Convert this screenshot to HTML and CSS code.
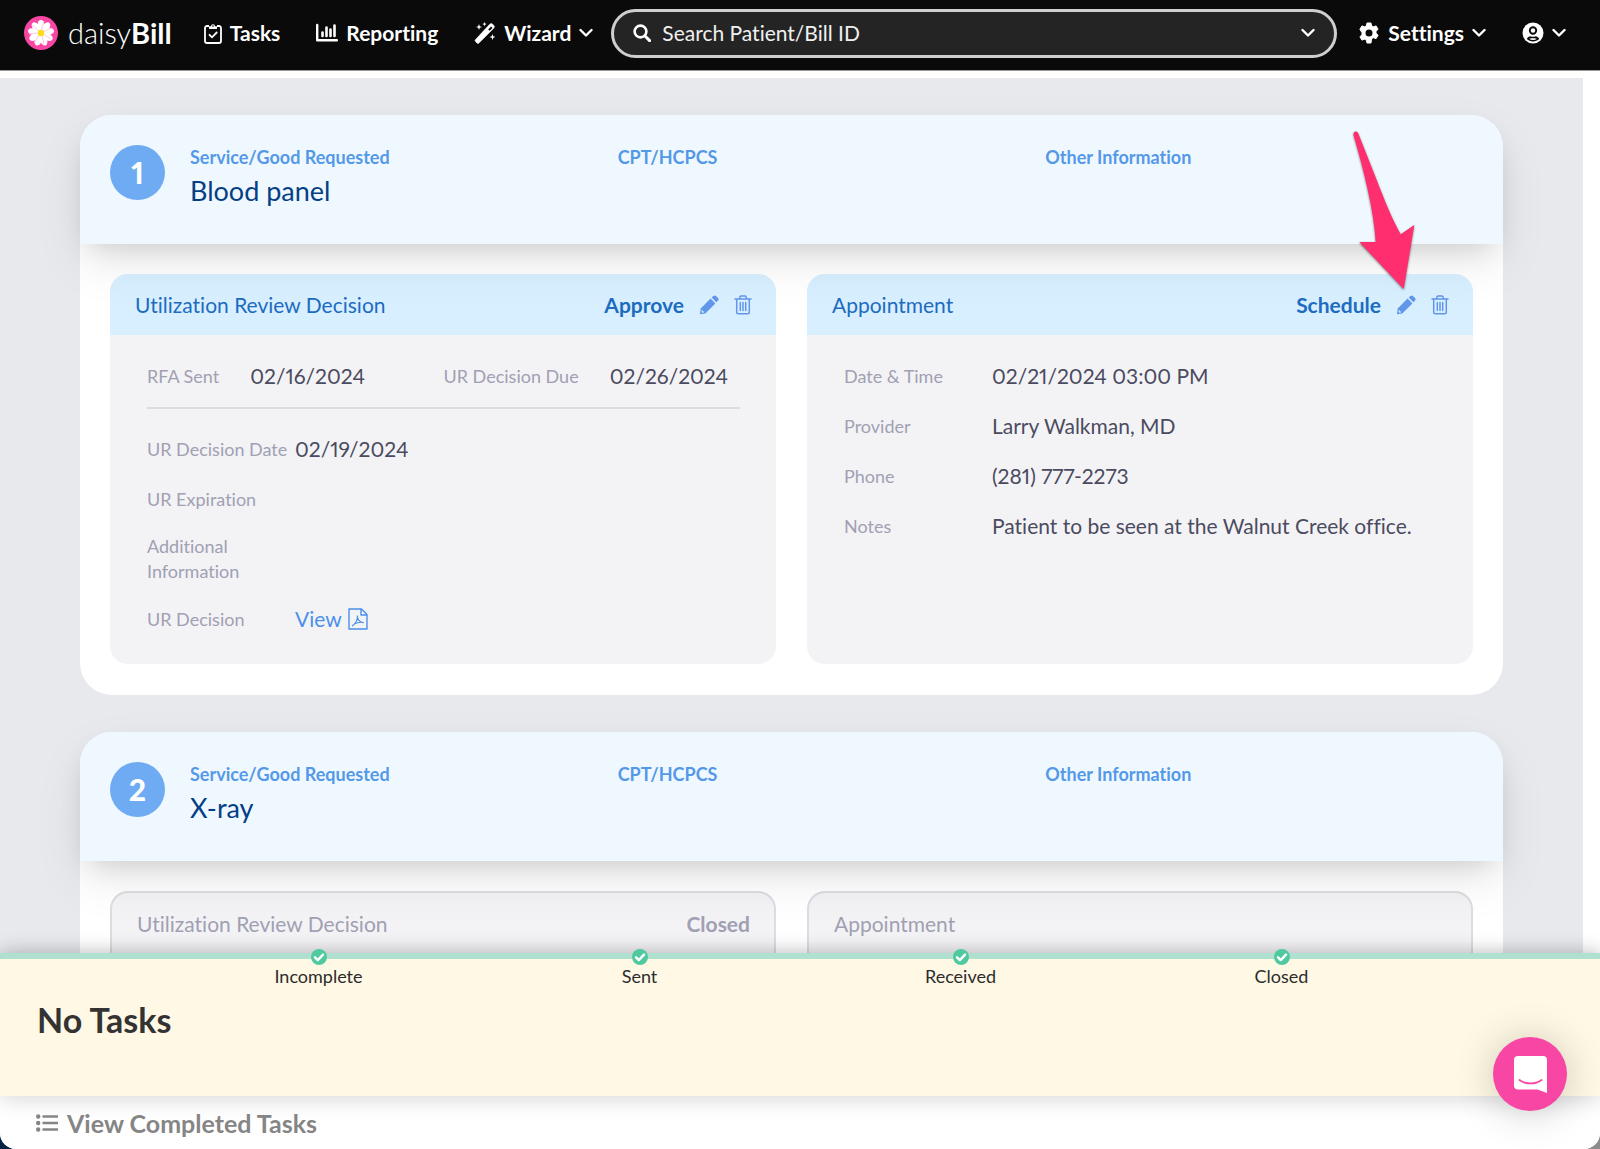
FILE: index.html
```html
<!DOCTYPE html>
<html lang="en">

<head>
    <meta charset="UTF-8">
    <meta name="viewport" content="width=device-width, initial-scale=1.0">
    <title>daisyBill</title>
    <link rel="stylesheet" href="styles.css">
</head>

<body>
    <!-- Shared icons -->
    <svg class="icon-defs" aria-hidden="true">
        <symbol id="chevron" viewBox="0 0 14 10">
            <path d="M1.5 2l5.5 5.5L12.5 2" fill="none" stroke="currentColor" stroke-width="2.4" stroke-linecap="round" stroke-linejoin="round"/>
        </symbol>
        <symbol id="pencil" viewBox="0 0 20 20">
            <path d="M11.6 3.6l4.800 4.800L6.300 18.500 1 19.200l.7-5.600z" fill="currentColor"/>
            <path d="M12.700 2.600l1.700-1.600a1.900 1.900 0 0 1 2.600 0l2 2a1.900 1.900 0 0 1 0 2.600l-1.600 1.700z" fill="currentColor"/>
            <path d="M3 14.600l.8 1.600 1.600.6-.4.700-1.600.3-.9-.9.200-1.600z" fill="#d8efff"/>
        </symbol>
        <symbol id="trash" viewBox="0 0 18 20">
            <path d="M1 4h16M5.8 4V2.4c0-.8.5-1.3 1.2-1.3h4c.7 0 1.2.5 1.2 1.3V4M2.7 4v13.2c0 .9.6 1.5 1.5 1.5h9.6c.9 0 1.5-.6 1.5-1.5V4M6.3 7.5v8M9 7.5v8M11.7 7.5v8" fill="none" stroke="currentColor" stroke-width="1.5" stroke-linecap="round"/>
        </symbol>
        <symbol id="check" viewBox="0 0 16 16">
            <circle cx="8" cy="8" r="8" fill="#51c9a0"/>
            <path d="M4 8.3l2.8 2.8L12 5.6" fill="none" stroke="#fff" stroke-width="2.4" stroke-linecap="round" stroke-linejoin="round"/>
        </symbol>
    </svg>

    <!-- Top navigation -->
    <header class="navbar">
        <a class="logo" href="#">
            <svg class="logo-mark" viewBox="0 0 34 34" aria-hidden="true">
                <circle cx="17" cy="17" r="17" fill="#f846a5"/>
                <g fill="#fff">
                    <ellipse cx="17" cy="9" rx="3.4" ry="5.2"/>
                    <ellipse cx="17" cy="9" rx="3.4" ry="5.2" transform="rotate(40 17 17)"/>
                    <ellipse cx="17" cy="9" rx="3.4" ry="5.2" transform="rotate(80 17 17)"/>
                    <ellipse cx="17" cy="9" rx="3.4" ry="5.2" transform="rotate(120 17 17)"/>
                    <ellipse cx="17" cy="9" rx="3.4" ry="5.2" transform="rotate(160 17 17)"/>
                    <ellipse cx="17" cy="9" rx="3.4" ry="5.2" transform="rotate(200 17 17)"/>
                    <ellipse cx="17" cy="9" rx="3.4" ry="5.2" transform="rotate(240 17 17)"/>
                    <ellipse cx="17" cy="9" rx="3.4" ry="5.2" transform="rotate(280 17 17)"/>
                    <ellipse cx="17" cy="9" rx="3.4" ry="5.2" transform="rotate(320 17 17)"/>
                    <circle cx="17" cy="17" r="6"/>
                </g>
                <path d="M17 15l3-10M19 16l9-4M19 18l8 5M18 19l2 9M15 19l-5 8M14 17l-9 1M15 15L8 9" stroke="#fbc3e0" stroke-width="0.9"/>
                <circle cx="17" cy="17" r="3.2" fill="#fddc13"/>
            </svg>
            <span class="logo-text">daisy<b>Bill</b></span>
        </a>
        <nav class="nav-links">
            <a href="#">
                <svg width="18" height="22" viewBox="0 0 18 22" aria-hidden="true">
                    <path d="M5 4H3a2 2 0 0 0-2 2v13a2 2 0 0 0 2 2h12a2 2 0 0 0 2-2V6a2 2 0 0 0-2-2h-2" fill="none" stroke="#fff" stroke-width="1.8"/>
                    <path d="M5 7V4.2h2a2 2 0 0 1 4 0h2V7z" fill="#fff"/>
                    <circle cx="9" cy="4" r="0.8" fill="#0a0a0a"/>
                    <path d="M5.5 12.8l2.5 2.5 4.7-4.8" fill="none" stroke="#fff" stroke-width="1.8" stroke-linecap="round"/>
                </svg>
                Tasks
            </a>
            <a href="#">
                <svg width="22" height="20" viewBox="0 0 22 20" aria-hidden="true">
                    <path d="M1.2 2v15.2H21" fill="none" stroke="#fff" stroke-width="2.4" stroke-linecap="round" stroke-linejoin="round"/>
                    <path d="M6.5 13V9.5M10.5 13V4.5M14.500 13V6.500M18.500 13V2.500" stroke="#fff" stroke-width="2.6" stroke-linecap="round"/>
                </svg>
                Reporting
            </a>
            <button type="button">
                <svg width="22" height="22" viewBox="0 0 22 22" aria-hidden="true">
                    <path d="M1.6 17.5L15.7 2.3a2.2 2.2 0 0 1 3 0l1 1a2.2 2.2 0 0 1 0 3L5 20.9a1.5 1.5 0 0 1-2.1 0L1.5 19.500a1.4 1.4 0 0 1 .1-2z" fill="#fff" stroke="#fff" stroke-width="0.6"/>
                    <path d="M14.2 7.5l2.8-3 1.5 1.4-2.900 2.9z" fill="#0a0a0a"/>
                    <path d="M5 2l.8 2.2L8 5l-2.200.8L5 8l-.8-2.200L2 5l2.200-.8zM10.500 0l.6 1.500 1.500.6-1.500.6-.6 1.500-.6-1.500-1.500-.6 1.500-.6zM18.500 12l.8 2.200 2.200.8-2.200.8-.8 2.200-.8-2.200-2.200-.8 2.200-.8z" fill="#fff"/>
                </svg>
                Wizard
                <svg class="chevron" aria-hidden="true"><use href="#chevron"/></svg>
            </button>
        </nav>
        <form class="search">
            <svg width="18" height="18" viewBox="0 0 18 18" aria-hidden="true">
                <circle cx="7.5" cy="7.5" r="5.9" fill="none" stroke="#fff" stroke-width="2.6"/>
                <path d="M12 12l4.6 4.6" stroke="#fff" stroke-width="3" stroke-linecap="round"/>
            </svg>
            <input type="text" aria-label="Search Patient/Bill ID" placeholder="Search Patient/Bill ID">
            <button type="button" aria-label="Search options">
                <svg class="chevron" aria-hidden="true"><use href="#chevron"/></svg>
            </button>
        </form>
        <div class="nav-links">
            <button type="button">
                <svg width="22" height="22" viewBox="0 0 22 22" aria-hidden="true">
                    <path d="M9 1h4l.6 2.8 1.8 1 2.7-.9 2 3.4-2.1 1.9v2.100l2.100 1.900-2 3.400-2.700-.9-1.800 1L13 21H9l-.6-2.800-1.800-1-2.700.9-2-3.400L4 12.800v-2.100L1.900 7.300l2-3.400 2.700.9 1.800-1z" fill="#fff" stroke="#fff" stroke-linejoin="round"/>
                    <circle cx="11" cy="11" r="3.5" fill="#0a0a0a"/>
                </svg>
                Settings
                <svg class="chevron" aria-hidden="true"><use href="#chevron"/></svg>
            </button>
            <button type="button" aria-label="Account">
                <svg width="22" height="22" viewBox="0 0 22 22" aria-hidden="true">
                    <circle cx="11" cy="11" r="10.5" fill="#fff"/>
                    <circle cx="11" cy="8.5" r="3.2" fill="none" stroke="#0a0a0a" stroke-width="1.9"/>
                    <path d="M4.800 17c.8-1.900 2.300-2.700 3.600-2.700 1.700.7 3.500.7 5.200 0 1.300 0 2.800.8 3.600 2.700-3.300 3.300-9.100 3.300-12.400 0z" fill="#0a0a0a"/>
                    <path d="M7 16.800c1-.9 7-.9 8 0-2.300 1.700-5.700 1.700-8 0z" fill="#fff"/>
                </svg>
                <svg class="chevron" aria-hidden="true"><use href="#chevron"/></svg>
            </button>
        </div>
    </header>

    <!-- Requested services -->
    <main class="content">
        <section class="card">
            <div class="card-header">
                <span class="number">1</span>
                <div class="request">
                    <div>
                        <h3>Service/Good Requested</h3>
                        <p>Blood panel</p>
                    </div>
                    <div>
                        <h3>CPT/HCPCS</h3>
                    </div>
                    <div>
                        <h3>Other Information</h3>
                    </div>
                </div>
            </div>
            <div class="card-body">
                <div class="panel">
                    <div class="panel-header">
                        <h4>Utilization Review Decision</h4>
                        <strong>Approve</strong>
                        <button type="button" aria-label="Edit decision"><svg width="20" height="20" aria-hidden="true"><use href="#pencil"/></svg></button>
                        <button type="button" aria-label="Delete decision"><svg width="18" height="20" aria-hidden="true"><use href="#trash"/></svg></button>
                    </div>
                    <div class="panel-body">
                        <dl class="dates">
                            <div><dt>RFA Sent</dt><dd>02/16/2024</dd></div>
                            <div><dt>UR Decision Due</dt><dd>02/26/2024</dd></div>
                        </dl>
                        <dl class="details">
                            <dt>UR Decision Date</dt>
                            <dd>02/19/2024</dd>
                            <dt>UR Expiration</dt>
                            <dd></dd>
                            <dt>Additional Information</dt>
                            <dd></dd>
                            <dt>UR Decision</dt>
                            <dd>
                                <a class="view-link" href="#">View
                                    <svg width="20" height="22" viewBox="0 0 20 22" aria-hidden="true">
                                        <path d="M1 1h12.500L19 6.500V21H1zM13 1v6h6" fill="none" stroke="currentColor" stroke-width="1.4" stroke-linejoin="round"/>
                                        <path d="M4.500 17.800c3-2.300 5.300-6.500 4.900-10.300 0 4 2 6.800 6.500 7.200-3-.8-6.500-.2-9.500 1.200" fill="none" stroke="currentColor" stroke-width="1.1" stroke-linecap="round"/>
                                    </svg>
                                </a>
                            </dd>
                        </dl>
                    </div>
                </div>
                <div class="panel">
                    <div class="panel-header">
                        <h4>Appointment</h4>
                        <strong>Schedule</strong>
                        <button type="button" aria-label="Edit appointment"><svg width="20" height="20" aria-hidden="true"><use href="#pencil"/></svg></button>
                        <button type="button" aria-label="Delete appointment"><svg width="18" height="20" aria-hidden="true"><use href="#trash"/></svg></button>
                    </div>
                    <div class="panel-body">
                        <dl class="details">
                            <dt>Date &amp; Time</dt>
                            <dd>02/21/2024 03:00 PM</dd>
                            <dt>Provider</dt>
                            <dd>Larry Walkman, MD</dd>
                            <dt>Phone</dt>
                            <dd>(281) 777-2273</dd>
                            <dt>Notes</dt>
                            <dd>Patient to be seen at the Walnut Creek office.</dd>
                        </dl>
                    </div>
                </div>
            </div>
            <!-- Pointer to the edit button -->
            <svg class="arrow" width="70" height="170" viewBox="0 0 70 170" aria-hidden="true">
                <path d="M3.500 9C3 5 7 4.500 8.300 7.500L26.700 54C34 73 42 93 50.700 108.300L64.300 99 53.700 163 9.300 116h16.400C24 85 14 45 3.500 9z" fill="#ff2e6e"/>
            </svg>
        </section>

        <section class="card">
            <div class="card-header">
                <span class="number">2</span>
                <div class="request">
                    <div>
                        <h3>Service/Good Requested</h3>
                        <p>X-ray</p>
                    </div>
                    <div>
                        <h3>CPT/HCPCS</h3>
                    </div>
                    <div>
                        <h3>Other Information</h3>
                    </div>
                </div>
            </div>
            <div class="card-body">
                <div class="panel closed">
                    <div class="panel-header">
                        <h4>Utilization Review Decision</h4>
                        <strong>Closed</strong>
                    </div>
                </div>
                <div class="panel closed">
                    <div class="panel-header">
                        <h4>Appointment</h4>
                    </div>
                </div>
            </div>
        </section>
    </main>

    <!-- Task drawer -->
    <footer class="tasks">
        <div class="tasks-current">
            <ol class="steps">
                <li><svg width="16" height="16" aria-hidden="true"><use href="#check"/></svg>Incomplete</li>
                <li><svg width="16" height="16" aria-hidden="true"><use href="#check"/></svg>Sent</li>
                <li><svg width="16" height="16" aria-hidden="true"><use href="#check"/></svg>Received</li>
                <li><svg width="16" height="16" aria-hidden="true"><use href="#check"/></svg>Closed</li>
            </ol>
            <h2>No Tasks</h2>
        </div>
        <a class="completed" href="#">
            <svg width="22" height="18" viewBox="0 0 22 18" aria-hidden="true">
                <circle cx="2.2" cy="2.5" r="2.2"/>
                <circle cx="2.2" cy="9" r="2.2"/>
                <circle cx="2.2" cy="15.5" r="2.2"/>
                <path d="M6.500 1.200h15.500v2.600H6.500zM6.500 7.700h15.500v2.600H6.500zM6.500 14.200h15.500v2.600H6.500z"/>
            </svg>
            View Completed Tasks
        </a>
    </footer>

    <button class="chat" type="button" aria-label="Open chat">
        <svg width="33" height="37" viewBox="0 0 33 37" aria-hidden="true">
            <path d="M4 0h25a4 4 0 0 1 4 4v33l-9.500-3.500H4a4 4 0 0 1-4-4V4a4 4 0 0 1 4-4z" fill="#fff"/>
            <path d="M5.500 24c6 4.600 16 4.600 22 0" fill="none" stroke="#f846a5" stroke-width="1.8" stroke-linecap="round"/>
        </svg>
    </button>
</body>

</html>
```

FILE: styles.css
```css
/* General */
* {
    box-sizing: border-box;
}

html {
    background: linear-gradient(to right, #032445, #8c8c8c);
}

body {
    font-family: Lato, 'Open Sans', sans-serif;
    font-size: 21px;
    line-height: 30px;
    font-variant-ligatures: none;
    font-variant-numeric: proportional-nums;
    margin: 0;
    height: 100vh;
    display: flex;
    flex-direction: column;
    background: #fff;
    border-radius: 0 0 16px 16px;
    overflow: hidden;
    color: #4b4b5f;
}

h2, h3, h4, p, dl, dd, ol {
    margin: 0;
    padding: 0;
}

a {
    color: inherit;
    text-decoration: none;
}

button {
    font: inherit;
    color: inherit;
    background: none;
    border: none;
    padding: 0;
    cursor: pointer;
}

svg {
    display: block;
    flex: none;
}

.icon-defs {
    position: absolute;
    width: 0;
    height: 0;
}

/* Navbar */
.navbar {
    display: flex;
    align-items: center;
    height: 71px;
    padding: 0 34px 4px 24px;
    background: #0a0a0a;
    border-bottom: 1px solid #999;
    color: #fff;
}

.logo {
    display: flex;
    align-items: center;
    gap: 10px;
    margin-right: 32px;
}

.logo-mark {
    width: 34px;
    height: 34px;
}

.logo-text {
    font-size: 29px;
    font-weight: 300;
}

.logo-text b {
    font-weight: 700;
}

.nav-links {
    display: flex;
    gap: 36px;
    font-weight: 700;
}

.nav-links a,
.nav-links button {
    display: flex;
    align-items: center;
    gap: 8px;
}

.chevron {
    width: 14px;
    height: 10px;
}

.search {
    flex: 1;
    display: flex;
    align-items: center;
    gap: 11px;
    height: 49px;
    margin: 0 21px 0 18px;
    padding: 0 19px;
    background: #242424;
    border: 3px solid #cfcfcf;
    border-radius: 25px;
}

.search input {
    flex: 1;
    min-width: 0;
    padding: 0;
    font: inherit;
    color: #fff;
    background: none;
    border: none;
    outline: none;
}

.search input::placeholder {
    color: #f0f0f0;
    opacity: 1;
}

/* Content */
.content {
    flex: 1;
    min-height: 0;
    overflow: hidden;
    margin: 7px 17px 0 0;
    padding: 37px 80px 0;
    background: #e8e9ed;
}

.card {
    position: relative;
    margin-bottom: 37px;
    background: #fff;
    border-radius: 32px;
}

.card-header {
    position: relative;
    z-index: 1;
    display: flex;
    gap: 25px;
    min-height: 129px;
    padding: 30px 30px 20px;
    background: #f0f8ff;
    border-radius: 32px 32px 0 0;
    box-shadow: 0 12px 30px -12px rgba(0, 0, 0, 0.18), 0 20px 48px rgba(0, 0, 0, 0.08);
}

.number {
    flex: none;
    width: 55px;
    height: 55px;
    line-height: 55px;
    text-align: center;
    font-size: 30px;
    font-weight: 900;
    color: #fff;
    background: #6eabf2;
    border-radius: 50%;
}

.request {
    flex: 1;
    display: grid;
    grid-template-columns: repeat(3, 1fr);
}

.request h3 {
    font-size: 18px;
    line-height: 24px;
    font-weight: 700;
    color: #5499e8;
}

.request p {
    font-size: 27px;
    line-height: 44px;
    color: #043f86;
}

.card-body {
    display: grid;
    grid-template-columns: 1fr 1fr;
    gap: 31px;
    padding: 30px 30px 31px;
}

/* Panels */
.panel {
    background: #f3f3f6;
    border-radius: 18px;
}

.panel-header {
    display: flex;
    align-items: center;
    height: 61px;
    padding: 0 24px 0 25px;
    color: #1d6cc0;
    background: #d8efff;
    border-radius: 18px 18px 0 0;
}

.panel-header h4 {
    flex: 1;
    font-size: 21px;
    font-weight: 400;
}

.panel-header button {
    margin-left: 15px;
    color: #6196ea;
}

.panel-body {
    padding: 26px 36px 30px 37px;
}

dt {
    font-size: 18px;
    line-height: 25px;
    color: #a0a0b2;
}

.dates {
    display: grid;
    grid-template-columns: 1fr 1fr;
    padding-bottom: 16px;
    margin-bottom: 25px;
    border-bottom: 2px solid #dcdce0;
}

.dates div {
    display: flex;
    align-items: center;
    gap: 31px;
}

.details {
    display: grid;
    grid-template-columns: 148px 1fr;
    row-gap: 20px;
    align-items: center;
}

.details dd {
    min-height: 30px;
}

.view-link {
    display: inline-flex;
    align-items: center;
    gap: 6px;
    color: #4b90ea;
}

.closed {
    border: 2px solid #dcdce1;
    border-bottom: none;
    min-height: 200px;
}

.closed .panel-header {
    color: #a0a0b2;
    background: none;
}

.arrow {
    position: absolute;
    z-index: 2;
    top: 11px;
    right: 83px;
    filter: drop-shadow(0 1px 1px rgba(0, 0, 0, 0.5));
}

/* Task drawer */
.tasks {
    position: relative;
    z-index: 3;
    background: #fff;
    box-shadow: 0 0 20px rgba(0, 0, 0, 0.2);
}

.tasks-current {
    height: 143px;
    background: #fff8e4;
    border-top: 6px solid #b0e0d0;
    box-shadow: 0 4px 20px rgba(0, 0, 0, 0.15);
}

.steps {
    display: grid;
    grid-template-columns: repeat(4, 1fr);
    margin: -10px 158px 0;
    list-style: none;
    font-size: 18px;
    line-height: 23px;
    color: #2c2c2c;
}

.steps li {
    display: flex;
    flex-direction: column;
    align-items: center;
}

.tasks h2 {
    padding: 12px 37px;
    font-size: 34px;
    line-height: 40px;
    color: #333;
}

.completed {
    display: flex;
    align-items: center;
    gap: 9px;
    height: 53px;
    padding-left: 36px;
    font-size: 25px;
    font-weight: 700;
    color: #858585;
    fill: #858585;
}

.chat {
    position: fixed;
    z-index: 4;
    right: 33px;
    bottom: 38px;
    width: 74px;
    height: 74px;
    display: flex;
    align-items: center;
    justify-content: center;
    background: #f846a5;
    border-radius: 50%;
    box-shadow: 0 2px 40px rgba(0, 0, 0, 0.2);
}
```
